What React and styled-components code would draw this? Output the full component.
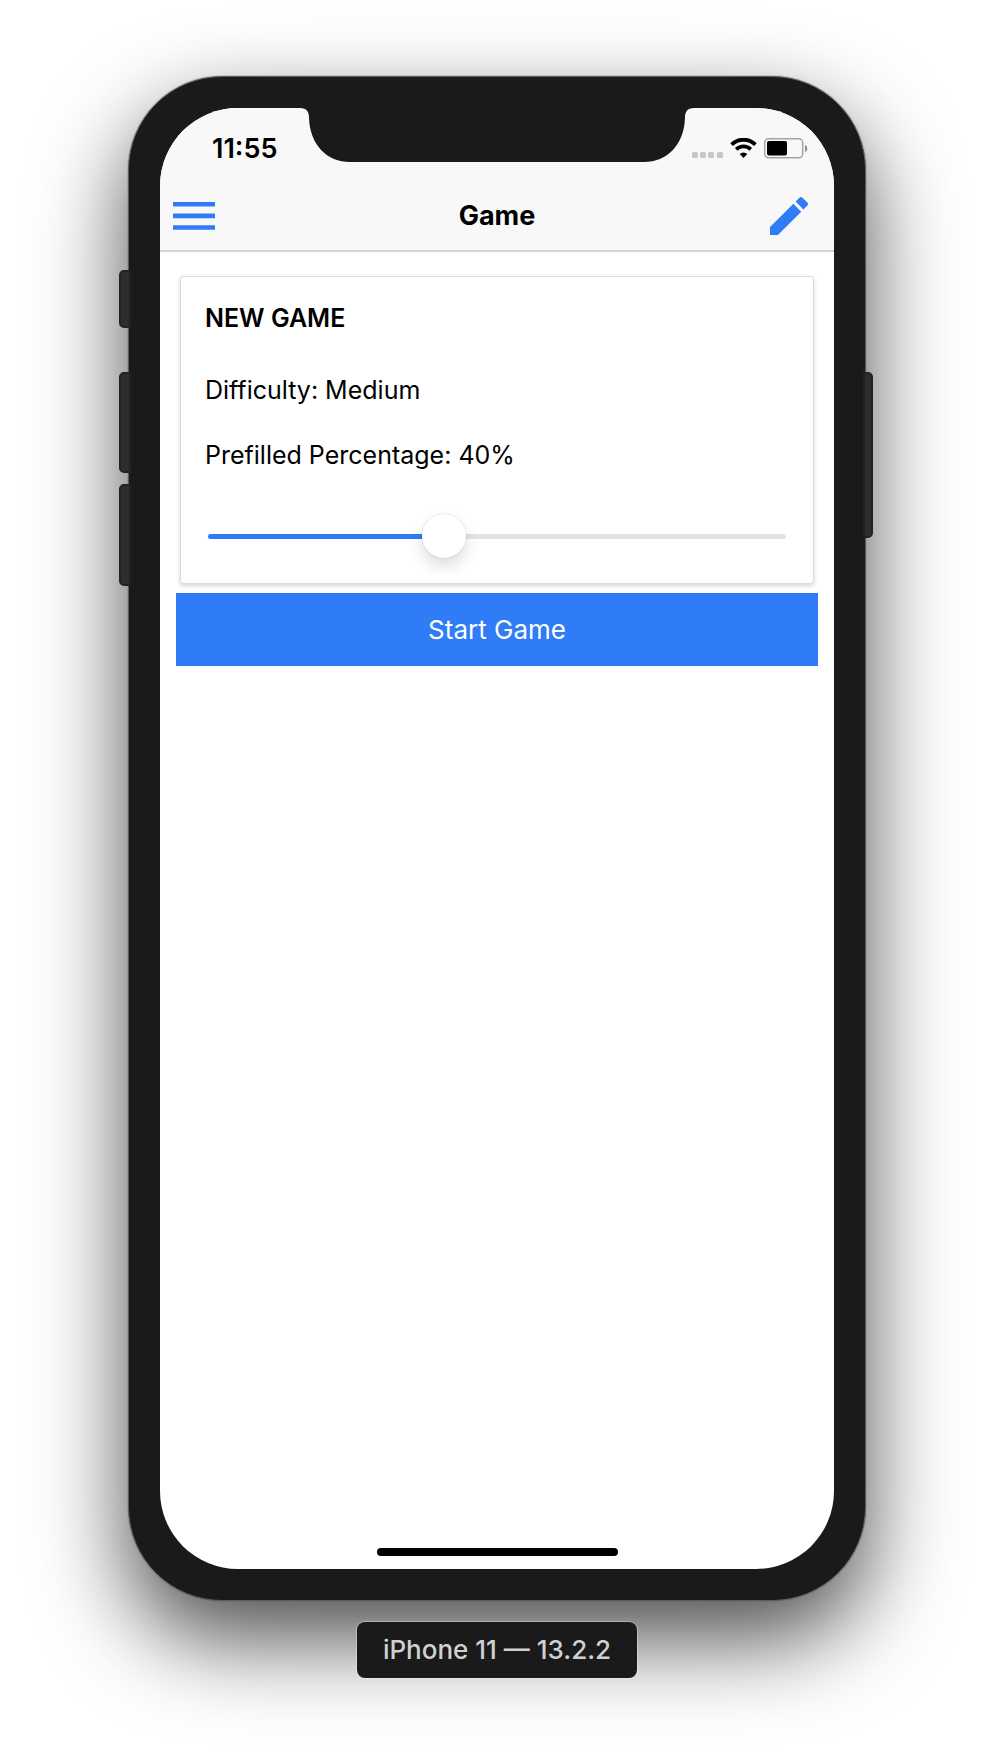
import React, { useState } from "react";
import styled, { createGlobalStyle } from "styled-components";

const BLUE = "#307cf6";
const BODY = "#1a1a1a";

const GlobalStyle = createGlobalStyle`
  *, *::before, *::after { box-sizing: border-box; }
  body {
    margin: 0;
    background: #fff;
    color: #000;
    font-family: Inter, "Liberation Sans", sans-serif;
    font-size: 25px;
    line-height: 32px;
  }
`;

const Page = styled.div`
  display: flex;
  flex-direction: column;
  align-items: center;
  gap: 21px;
  min-height: 100vh;
  padding: 76px 128px 72px;
  overflow: hidden;
`;

const Phone = styled.div`
  position: relative;
  display: flex;
  width: 100%;
  max-width: 760px;
  aspect-ratio: 738 / 1525;
  padding: 31px;
  border: 1px solid #5c5c5c;
  border-radius: 94px;
  background: ${BODY};
  box-shadow: 0 0 0 1px rgba(90, 90, 90, 0.2), 0 38px 90px rgba(0, 0, 0, 0.7);
`;

const SideKey = styled.span`
  position: absolute;
  top: ${(p) => p.$top}px;
  ${(p) => p.$side}: ${(p) => (p.$side === "left" ? -10 : -8)}px;
  width: ${(p) => (p.$side === "left" ? 12 : 10)}px;
  height: ${(p) => p.$length}px;
  border: 2px solid #222;
  border-radius: ${(p) => (p.$side === "left" ? "5px 0 0 5px" : "0 5px 5px 0")};
  background: #2d2d2d;
`;

const Screen = styled.div`
  position: relative;
  flex: 1;
  min-width: 0;
  display: flex;
  flex-direction: column;
  align-items: stretch;
  border-radius: 78px;
  background: #fff;
  overflow: hidden;
`;

const Notch = styled.svg`
  position: absolute;
  top: 0;
  left: 50%;
  width: 394px;
  height: 54px;
  transform: translateX(-50%);
`;

const Header = styled.header`
  background: #f8f8f8;
  border-bottom: 2px solid #d4d4d4;
`;

const StatusBar = styled.div`
  display: flex;
  justify-content: space-between;
  align-items: center;
  height: 72px;
  padding: 10px 26px 0 52px;
`;

const Clock = styled.time`
  font-size: 27px;
  font-weight: 600;
`;

const StatusIcons = styled.svg`
  display: block;
  width: 116px;
  height: 22px;
`;

const NavBar = styled.div`
  display: grid;
  grid-template-columns: 1fr auto 1fr;
  align-items: center;
  height: 70px;
  padding: 1px 26px 0 13px;
`;

const NavButton = styled.button`
  display: block;
  justify-self: ${(p) => p.$align};
  padding: 0;
  border: 0;
  background: none;
  color: ${BLUE};
  cursor: pointer;
  svg { display: block; fill: currentColor; }
`;

const Title = styled.h1`
  margin: 0 0 0 13px;
  font-size: 27px;
  font-weight: 700;
`;

const Content = styled.main`
  display: flex;
  flex-direction: column;
  gap: 9px;
  padding: 24px 16px;
`;

const Card = styled.section`
  margin: 0 4px;
  padding: 25px 24px;
  border: 1px solid #dcdcdc;
  border-radius: 3px;
  background: #fff;
  box-shadow: 0 2px 4px rgba(0, 0, 0, 0.17);
`;

const CardTitle = styled.h2`
  margin: 0 0 40px;
  font-size: 25px;
  font-weight: 600;
`;

const Row = styled.p`
  margin: 0 0 33px;
`;

const RangeLabel = styled.label`
  display: block;
  margin: 0 0 43px;
`;

const Range = styled.input`
  appearance: none;
  display: block;
  width: calc(100% - 6px);
  height: 44px;
  margin: 0 3px;
  background: none;
  cursor: pointer;

  &::-webkit-slider-runnable-track {
    height: 5px;
    border-radius: 3px;
    background: linear-gradient(to right, ${BLUE} var(--fill), #e4e4e6 var(--fill));
  }
  &::-webkit-slider-thumb {
    appearance: none;
    width: 44px;
    height: 44px;
    margin-top: -20px;
    border-radius: 50%;
    background: #fff;
    box-shadow: 0 0 2px rgba(0, 0, 0, 0.14), 0 8px 16px rgba(0, 0, 0, 0.14);
  }
`;

const StartButton = styled.button`
  height: 73px;
  border: 0;
  background: ${BLUE};
  color: #fff;
  font: inherit;
  font-size: 26px;
  cursor: pointer;
`;

const HomeIndicator = styled.div`
  width: 241px;
  height: 8px;
  margin: auto auto 13px;
  border-radius: 4px;
  background: #000;
`;

const DeviceLabel = styled.div`
  position: relative;
  padding: 12px 26px;
  border-radius: 8px;
  background: ${BODY};
  color: #d0d0d0;
  font-size: 26px;
  font-weight: 500;
  box-shadow: 0 0 0 1px rgba(255, 255, 255, 0.3);
`;

function StatusGlyphs() {
  return (
    <StatusIcons viewBox="0 0 116 22" role="img" aria-label="No signal, Wi-Fi, battery 60%">
      <g fill="#c7c7c7">
        {[0, 8, 16, 25].map((x) => (
          <rect key={x} x={x} y="14" width="6" height="6" rx="1.5" />
        ))}
      </g>
      <g fill="none" stroke="#000">
        <path d="M39.6 6.6a17 17 0 0 1 23.8 0" strokeWidth="3.8" />
        <path d="M44.2 11.4a10.4 10.4 0 0 1 14.6 0" strokeWidth="3.6" />
      </g>
      <path d="M51.5 20l-3.8-3.9a5.4 5.4 0 0 1 7.6 0z" />
      <rect x="72.7" y="0.8" width="38" height="19" rx="4" fill="none" stroke="#a3a3a3" strokeWidth="1.5" />
      <rect x="75" y="3" width="20" height="14.5" rx="2" />
      <path d="M113 7c3 1 3 6 0 7z" fill="#8c8c8c" />
    </StatusIcons>
  );
}

export default function App() {
  const [prefilled, setPrefilled] = useState(40);
  const fill = `calc(22px + (100% - 44px) * ${prefilled / 100})`;

  return (
    <>
      <GlobalStyle />
      <Page>
        <Phone>
          <SideKey $side="left" $top={193} $length={58} />
          <SideKey $side="left" $top={295} $length={101} />
          <SideKey $side="left" $top={407} $length={102} />
          <SideKey $side="right" $top={295} $length={166} />
          <Screen>
            <Header>
              <StatusBar>
                <Clock>11:55</Clock>
                <StatusGlyphs />
              </StatusBar>
              <NavBar>
                <NavButton type="button" aria-label="Menu" $align="start">
                  <svg width="42" height="28" viewBox="0 0 42 28">
                    <path d="M0 0h42v4.6H0zM0 11.6h42v4.6H0zM0 23.2h42v4.6H0z" />
                  </svg>
                </NavButton>
                <Title>Game</Title>
                <NavButton type="button" aria-label="Edit" $align="end">
                  <svg width="38" height="38" viewBox="64 64 384 384">
                    <path d="M64 368v80h80l235.727-235.729-79.999-79.998L64 368zm377.602-217.602c8.531-8.531 8.531-21.334 0-29.865l-50.135-50.135c-8.531-8.531-21.334-8.531-29.865 0l-39.468 39.469 79.999 79.998 39.469-39.467z" />
                  </svg>
                </NavButton>
              </NavBar>
            </Header>
            <Content>
              <Card>
                <CardTitle>NEW GAME</CardTitle>
                <Row>Difficulty: Medium</Row>
                <RangeLabel htmlFor="prefilled">Prefilled Percentage: {prefilled}%</RangeLabel>
                <Range
                  id="prefilled"
                  type="range"
                  min="0"
                  max="100"
                  value={prefilled}
                  onChange={(e) => setPrefilled(Number(e.target.value))}
                  style={{ "--fill": fill }}
                />
              </Card>
              <StartButton type="button">Start Game</StartButton>
            </Content>
            <HomeIndicator />
            <Notch viewBox="0 0 394 54" aria-hidden="true">
              <path
                fill={BODY}
                d="M0 0C7 0 9 4 9 10C10 37 27 54 50 54H344C367 54 384 37 385 10C385 4 387 0 394 0Z"
              />
            </Notch>
          </Screen>
        </Phone>
        <DeviceLabel>iPhone 11 — 13.2.2</DeviceLabel>
      </Page>
    </>
  );
}
